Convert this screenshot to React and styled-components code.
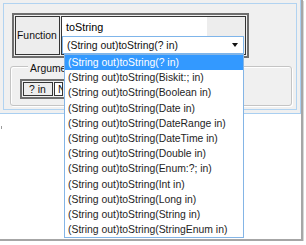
import React from 'react';
import styled, { createGlobalStyle } from 'styled-components';

const GlobalStyle = createGlobalStyle`
  *, *::before, *::after { box-sizing: border-box; }
  html, body { margin: 0; padding: 0; background: #ffffff; }
  body {
    font-family: "Liberation Sans", Arial, sans-serif;
    color: #111;
  }
`;

const Window = styled.div`
  position: relative;
  width: 303px;
  height: 241px;
  border-right: 2px solid #a6a6a6;
  border-bottom: 2px solid #a6a6a6;
  box-shadow: 1px 1px 0 #d6d6d6;
`;

const Dialog = styled.div`
  width: 301px;
  height: 114px;
  padding: 3px;
  background: #f0f0f0;
  border-right: 1px solid #a9cff1;
  border-bottom: 1px solid #a9cff1;
`;

const Panel = styled.div`
  height: 100%;
  border: 1px solid #b1d3f1;
  display: flex;
  flex-direction: column;
  align-items: flex-start;
`;

const FormTable = styled.div`
  display: flex;
  gap: 1px;
  padding: 1px;
  width: ${(p) => p.$width}px;
  margin: ${(p) => p.$margin};
  border: 2px solid #6e6e6e;
  background: #f0f0f0;
`;

const Cell = styled.div`
  display: flex;
  flex-direction: ${(p) => (p.$column ? 'column' : 'row')};
  align-items: ${(p) => (p.$column ? 'flex-start' : 'center')};
  width: ${(p) => (p.$width ? `${p.$width}px` : 'auto')};
  flex: ${(p) => (p.$width ? 'none' : '1')};
  height: ${(p) => p.$height}px;
  padding-left: ${(p) => p.$pad || 0}px;
  border: 1px solid #353535;
  background: ${(p) => (p.$white ? '#ffffff' : '#ededed')};
  font-size: 10.4px;
  color: #111;
  white-space: nowrap;
  overflow: hidden;
`;

const TextBox = styled.div`
  width: 145px;
  height: 19px;
  flex: none;
  display: flex;
  align-items: center;
  padding-left: 4px;
  background: #ffffff;
  font-size: 10.8px;
  color: #000;
`;

const Select = styled.div`
  width: 182px;
  height: 18px;
  flex: none;
  display: flex;
  align-items: center;
  justify-content: space-between;
  padding: 0 5px 0 4px;
  background: #ffffff;
  border: 1px solid #7fb5ea;
  font-size: 10.4px;
  color: #111;
`;

const Arrow = styled.span`
  width: 0;
  height: 0;
  margin-top: -1px;
  border-left: 3px solid transparent;
  border-right: 3px solid transparent;
  border-top: 4px solid #111;
`;

const GroupBox = styled.div`
  width: 282px;
  margin: 8px 0 0 6px;
  padding: 0 8px 6px 9px;
  border: 1px solid #c4c4c4;
  border-radius: 3px;
  box-shadow: inset 1px 1px 0 #ffffff, 1px 1px 0 #ffffff;
`;

const Legend = styled.div`
  width: fit-content;
  margin: -4px 0 0 8px;
  padding: 0 2px;
  background: #f0f0f0;
  font-size: 10.4px;
  line-height: 12px;
  color: #111;
`;

const Caret = styled.div`
  width: 1px;
  height: 3px;
  margin: 12px 0 0 1px;
  background: #9c9c9c;
`;

const DropList = styled.ul`
  position: absolute;
  left: 64px;
  top: 54px;
  width: 180px;
  margin: 0;
  padding: 0;
  list-style: none;
  background: #ffffff;
  border: 1px solid #84b5e6;
`;

const Option = styled.li`
  height: 15.2px;
  line-height: 15.2px;
  padding-left: 3px;
  font-size: 10.4px;
  white-space: nowrap;
  background: ${(p) => (p.$selected ? '#3399ff' : 'transparent')};
  color: ${(p) => (p.$selected ? '#ffffff' : '#1e1e1e')};
`;

const options = [
  '? in',
  'Biskit:; in',
  'Boolean in',
  'Date in',
  'DateRange in',
  'DateTime in',
  'Double in',
  'Enum:?; in',
  'Int in',
  'Long in',
  'String in',
  'StringEnum in',
];

export default function App() {
  return (
    <>
      <GlobalStyle />
      <Window>
        <Dialog>
          <Panel>
            <FormTable $width={237} $margin="9px 0 0 8px">
              <Cell $width={45} $height={39} $pad={1}>
                Function
              </Cell>
              <Cell $height={39} $column>
                <TextBox>toString</TextBox>
                <Select>
                  <span>(String out)toString(? in)</span>
                  <Arrow />
                </Select>
              </Cell>
            </FormTable>
            <GroupBox>
              <Legend>Argument</Legend>
              <FormTable $width={46} $margin="4px 0 0 0">
                <Cell $width={30} $height={14} $pad={5}>
                  ? in
                </Cell>
                <Cell $height={14} $pad={3} $white>
                  N
                </Cell>
              </FormTable>
            </GroupBox>
          </Panel>
        </Dialog>
        <Caret />
        <DropList>
          {options.map((o, i) => (
            <Option key={o} $selected={i === 0}>
              (String out)toString({o})
            </Option>
          ))}
        </DropList>
      </Window>
    </>
  );
}
